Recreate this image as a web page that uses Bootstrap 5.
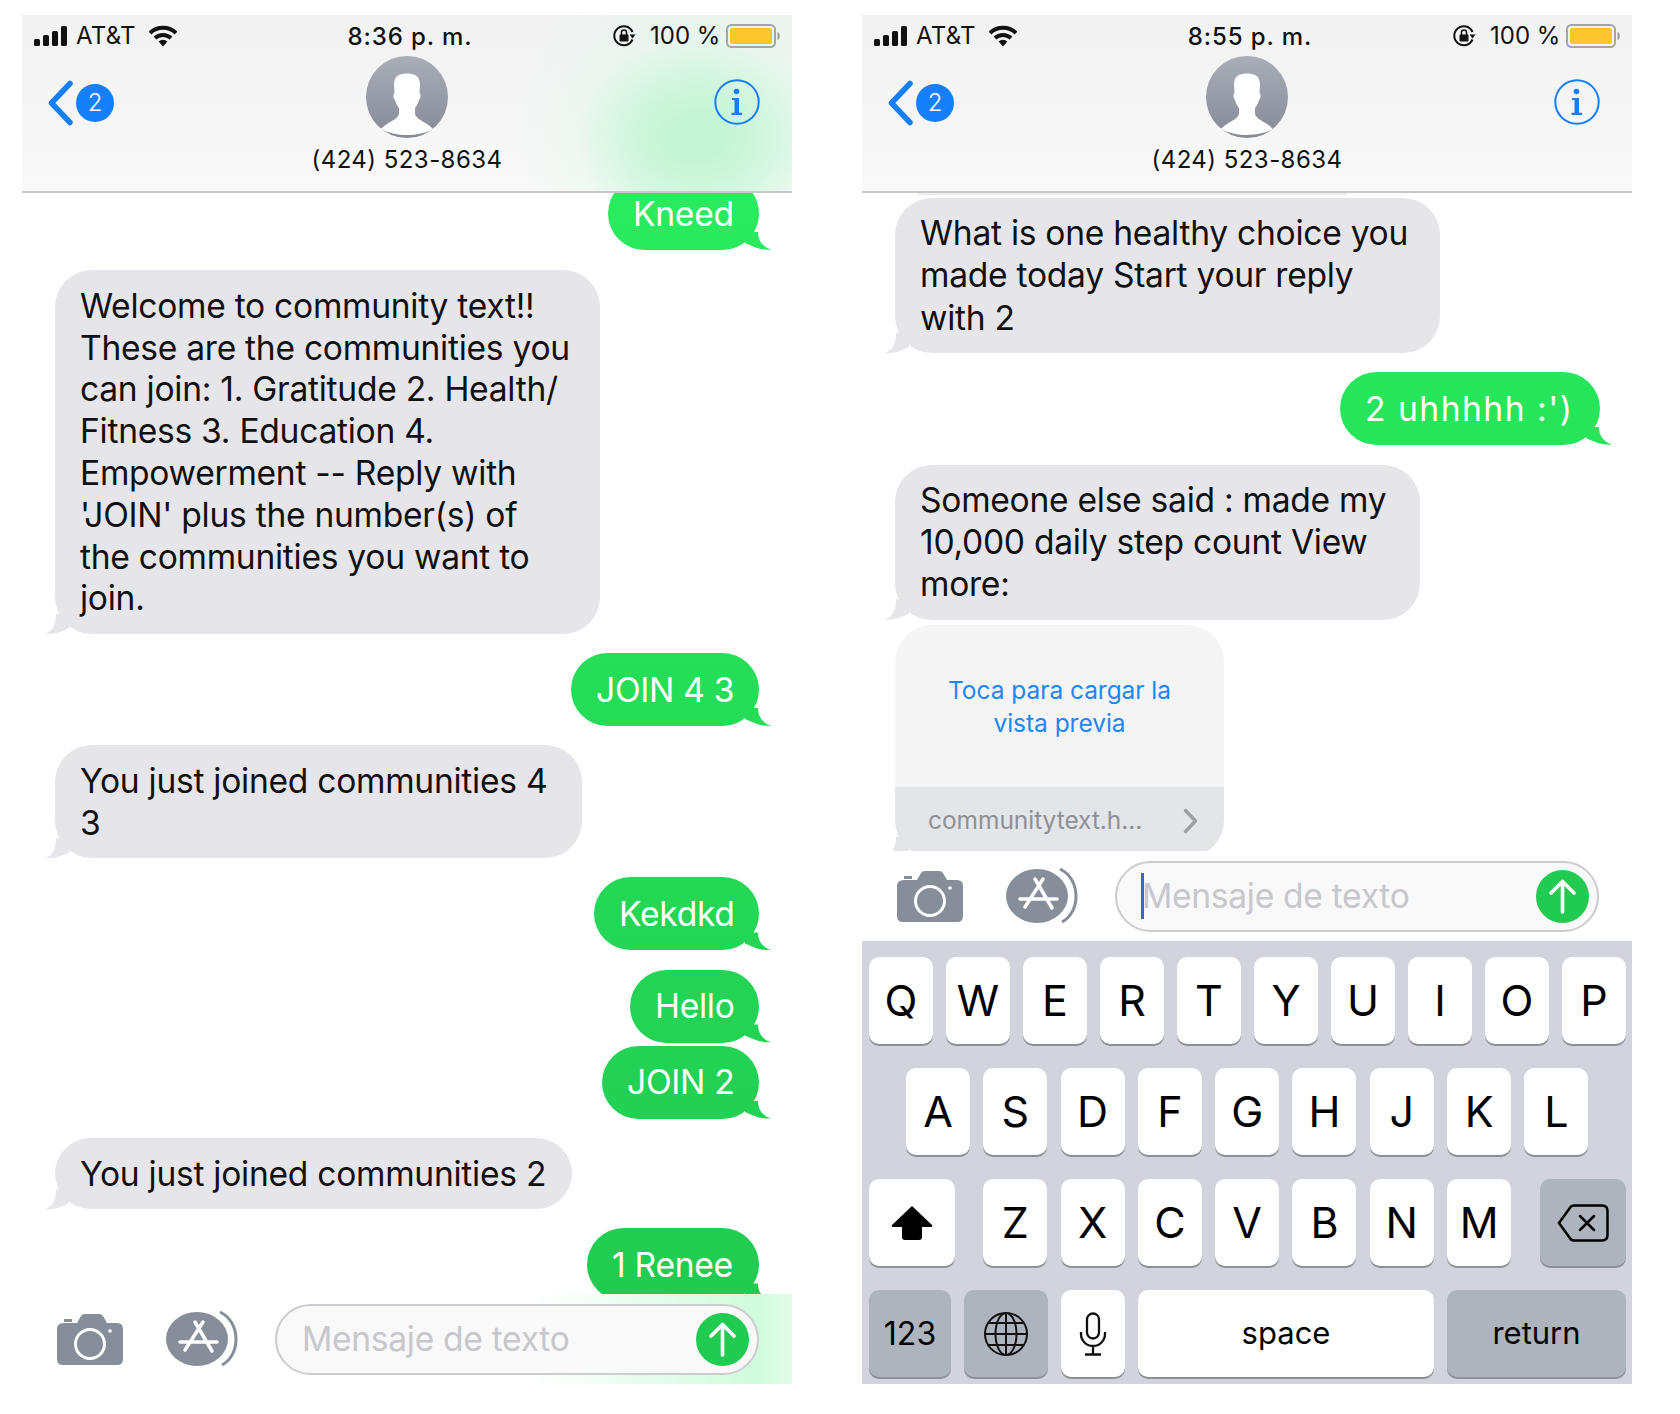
<!DOCTYPE html>
<html lang="es">
<head>
<meta charset="utf-8">
<title>Mensajes</title>
<link href="https://cdn.jsdelivr.net/npm/bootstrap@5.3.0/dist/css/bootstrap.min.css" rel="stylesheet">
<style>
html,body{background:#fff;margin:0}
body{font-family:Inter,"Noto Sans",sans-serif;height:1414px;overflow:hidden}
.stage{padding:15px 0 0 22px;gap:70px}
.phone{width:770px;height:1369px;overflow:hidden;background:#fff}
.phone-head{height:178px;flex:none;background:linear-gradient(#f2f2f3,#f9f9f9);border-bottom:2px solid #c8c8ca;color:#111}
.head-green{background:radial-gradient(ellipse 122px 98px at 674px 122px,#c6f5d6 0,#c6f5d6 25%,rgba(198,245,214,.5) 65%,rgba(198,245,214,0) 100%),radial-gradient(ellipse 200px 190px at 690px 120px,rgba(220,248,230,.9) 0,rgba(220,248,230,0) 100%),linear-gradient(#f2f2f3,#f9f9f9)}
.status-row{height:41px;display:grid;grid-template-columns:1fr auto 1fr;align-items:center;padding:0 11px 0 12px;font-size:24px;letter-spacing:-.2px}
.time-text{font-weight:500;padding-left:5px;padding-top:2px;letter-spacing:.9px}
.sig{width:34px;height:20px}
.wifi{width:28px;height:22px;margin-left:13px}
.carrier{margin-left:8px;letter-spacing:.25px}
.lock{width:24px;height:24px;margin-right:14px}
.pct{margin-right:5px;width:71px;white-space:nowrap;letter-spacing:0}
.batt{width:55px;height:24px}
.nav-row{display:grid;grid-template-columns:1fr auto 1fr;height:82px;align-items:center;padding:0 29px}
.nav-left{margin-left:-3px;padding-top:11px}
.nav-right{margin-right:3px;padding-top:10px}
.chev{width:28px;height:46px}
.badge-num{width:38px;height:38px;border-radius:50%;background:#147efb;color:#fff;font-size:24px;font-weight:300;margin-left:0}
.info-ic{width:46px;height:46px}
.avatar{width:82px;height:82px}
.phone-num{font-size:24px;line-height:30px;letter-spacing:.45px;margin-top:7px}
.msgs{flex:1 1 0;min-height:0;overflow:hidden;padding:0 33px}
.bub{font-size:33.6px;line-height:41.8px;border-radius:37px;white-space:nowrap;position:relative;margin-top:19.2px;letter-spacing:-.27px;flex:none}
.bub-in{background:#e5e5ea;color:#111;align-self:flex-start;padding:14.7px 26px 14.7px 25px}
.bub-out{background:linear-gradient(#29ec5d 170px,#21cb51 1300px) fixed;color:#fff;align-self:flex-end;text-align:center;padding:15.6px 28px 15.6px 25px}
.bub-in::before,.bub-out::before,.preview::before{content:"";position:absolute;bottom:0;width:40px;height:30px}
.bub-out::before{right:-12px;background:inherit;clip-path:path("M27 12 C27 21 32 27 40 29.500 C33 30.500 24 28 14 23 L14 12 Z")}
.bub-in::before{left:-10px;background:#e5e5ea;clip-path:path("M11 10 C11 20 8 27 0 30 C7 30.500 15 29 24 24 L24 10 Z")}
.first-left{margin-top:-16px;width:151px;margin-bottom:1px}
.tight{margin-top:3.3px}
.w-welcome{width:545px}.w-join43{width:188px}.w-joined43{width:527px}.w-kek{width:165px}.w-hello{width:129px}.w-join2{width:157px}.w-joined2{width:517px}.w-renee{width:172px}
.three-line{line-height:42.3px;padding-top:14px;padding-bottom:14px}
.w-healthy{width:545px;margin-top:3px}.w-uh{width:260px;margin-right:-1px;letter-spacing:1.5px}.w-someone{width:525px;margin-top:19.6px}
.sliver{height:2px;width:430px;margin-left:22px;background:#ededf0;flex:none}
.preview{width:329px;flex:none;height:232px;margin-top:5px;border-radius:37px;background:#f5f5f6;position:relative;align-self:flex-start}
.preview::before{left:-10px;background:#e4e5e9;clip-path:path("M11 10 C11 20 8 27 0 30 C7 30.500 15 29 24 24 L24 10 Z")}
.prev-top{height:162px;font-size:24.5px;line-height:33px;color:#1f86f5;letter-spacing:-.04px;padding-top:2px;position:relative;z-index:1}
.prev-bot{height:70px;background:#e4e5e9;border-radius:0 0 37px 37px;font-size:24.5px;color:#8f9094;padding:0 26px 2px 33px;position:relative;z-index:1;letter-spacing:-.05px}
.prev-chev{width:15px;height:26px}
.foot{flex:none;padding:0 33px 0 35px;background:#fff;position:relative;z-index:2;height:90px}
.foot-left{background:linear-gradient(90deg,rgba(205,251,220,0) 510px,#d0fbdd 735px,#e3fcea 770px)}
.cam{width:66px;height:52px;margin-right:43px}
.appi{width:73px;height:58px;margin-right:36px}
.inp{flex:1;height:71px;border:2px solid #cbcbd0;border-radius:36px;background:#f9f9f9;padding:0 8px 0 25px;font-size:33.6px;color:#c7c7cc;letter-spacing:-.3px}
.cursor{width:3px;height:46px;background:#3d60e3;margin-left:-1px;margin-right:-2px}
.send{width:53px;height:53px;margin-left:auto}
.kbd-area{flex:none;height:443px;background:#d1d4dc;padding:16px 7px 0 7px;gap:24px}
.kb-row{gap:13px;height:87px}
.kb-key{width:64px;height:87px;flex:none;background:#fff;border-radius:10px;box-shadow:0 2px 0 #8d9096;font-size:43px;color:#000;letter-spacing:0}
.kb-sys{background:#adb4be}
.row-a{padding-left:37px;gap:13.3px}
.row-z{gap:13.3px}
.wide-shift{width:86px}
.kb-gap{margin-right:15px}
.kb-del{width:86px;margin-left:16px}
.k-123{width:82px;font-size:32px}.k-globe{width:84px}.k-space{width:296px;font-size:31px}.k-return{width:179px;font-size:31px}
.ic-shift{width:42px;height:36px}.ic-del{width:52px;height:38px}.ic-globe{width:46px;height:46px}.ic-mic{width:28px;height:44px}
</style>
</head>
<body>
<svg width="0" height="0" class="d-block">
<defs>
<linearGradient id="avg" x1="0" y1="0" x2="0" y2="1"><stop offset="0" stop-color="#a9adb8"/><stop offset="1" stop-color="#858a96"/></linearGradient>
<symbol id="s-sig" viewBox="0 0 34 20"><rect x="0" y="13" width="6" height="7" rx="1.5" fill="#111"/><rect x="9" y="9" width="6" height="11" rx="1.5" fill="#111"/><rect x="18" y="5" width="6" height="15" rx="1.5" fill="#111"/><rect x="27" y="0" width="6" height="20" rx="1.5" fill="#111"/></symbol>
<symbol id="s-wifi" viewBox="0 0 28 22"><path d="M1 8 A19 19 0 0 1 27 8" fill="none" stroke="#111" stroke-width="4"/><path d="M6 13 A12 12 0 0 1 22 13" fill="none" stroke="#111" stroke-width="4"/><path d="M9.5 16.5 A7 7 0 0 1 18.5 16.5 L14 21.5 Z" fill="#111"/></symbol>
<symbol id="s-lock" viewBox="0 0 24 24"><path d="M20.5 15.5 A9.5 9.5 0 1 1 20.5 8" fill="none" stroke="#111" stroke-width="2"/><path d="M17.5 10.5 L23.5 10.5 L20.5 14.5Z" fill="#111"/><rect x="7.5" y="10.5" width="9" height="7" rx="1" fill="#111"/><path d="M9.5 11 V8.5 A2.5 2.5 0 0 1 14.5 8.5 V11" fill="none" stroke="#111" stroke-width="1.6"/></symbol>
<symbol id="s-batt" viewBox="0 0 55 24"><rect x="1" y="1" width="48" height="22" rx="4.5" fill="none" stroke="#a5a5a5" stroke-width="2"/><rect x="4" y="4" width="42" height="16" rx="2" fill="#fcc62d"/><path d="M51.500 8 C54.500 9 54.500 15 51.500 16Z" fill="#9a9a9a"/></symbol>
<symbol id="s-chev" viewBox="0 0 28 46"><path d="M22 3.500 L3.500 23 L22 42.500" fill="none" stroke="#147efb" stroke-width="5.500" stroke-linecap="round" stroke-linejoin="round"/></symbol>
<symbol id="s-info" viewBox="0 0 46 46"><circle cx="23" cy="23" r="21.700" fill="none" stroke="#147efb" stroke-width="2"/><circle cx="22.500" cy="12.500" r="2.800" fill="#147efb"/><path d="M18 19 H25 V33.800 H28 V36 H17.500 V33.800 H20.500 V21 H18Z" fill="#147efb"/></symbol>
<symbol id="s-avatar" viewBox="0 0 82 82"><circle cx="41" cy="41" r="41" fill="url(#avg)"/><path d="M41 17.500 C50 17.500 54 21 54 29 L53.500 37 C55 38 55 42 53 44 C52 48 50.500 50 49 52 L49 58 C50 62 56 65 61 68 C63 69 65 71 67 73 C60 77 50 79 41 79 C32 79 22 77 15 73 C17 71 19 69 21 68 C26 65 32 62 33 58 L33 52 C31.500 50 30 48 29 44 C27 42 27 38 28.500 37 L28 29 C28 21 32 17.500 41 17.500Z" fill="#fff"/></symbol>
<symbol id="s-cam" viewBox="0 0 66 52"><path d="M7 10 H20 L24 3 Q25 1 28 1 H42 Q45 1 46 3 L50 10 H60 Q66 10 66 16 V46 Q66 52 60 52 H6 Q0 52 0 46 V16 Q0 10 7 10Z" fill="#868e99"/><rect x="7" y="6" width="8" height="3" fill="#868e99"/><circle cx="33" cy="31" r="14.500" fill="none" stroke="#fff" stroke-width="3"/><circle cx="53" cy="18" r="1.800" fill="#fff"/></symbol>
<symbol id="s-app" viewBox="0 0 73 58"><path d="M54 2 C75 12 75 45 56 55" fill="none" stroke="#868e99" stroke-width="3"/><ellipse cx="31" cy="29" rx="31" ry="27" fill="#868e99"/><path d="M37 12 L19 40 M29 12 L46 41 M14 32 H51" fill="none" stroke="#fff" stroke-width="3.500" stroke-linecap="round"/></symbol>
<symbol id="s-send" viewBox="0 0 53 53"><circle cx="26.500" cy="26.500" r="26.500" fill="#21cb51"/><path d="M26.500 42 V12 M15 23 L26.500 11.500 L38 23" fill="none" stroke="#fff" stroke-width="3.600" stroke-linecap="round" stroke-linejoin="round"/></symbol>
<symbol id="s-shift" viewBox="0 0 42 36"><path d="M21 1 L41 20 Q42 22 39 22 H31 V32 Q31 35 28 35 H14 Q11 35 11 32 V22 H3 Q0 22 1 20Z" fill="#000"/></symbol>
<symbol id="s-del" viewBox="0 0 52 38"><path d="M17 1.500 H45 Q50.500 1.500 50.500 7 V31 Q50.500 36.500 45 36.500 H17 Q15 36.500 13.500 35 L2 19 L13.500 3 Q15 1.500 17 1.500Z" fill="none" stroke="#000" stroke-width="2.500"/><path d="M23 12 L37 26 M37 12 L23 26" stroke="#000" stroke-width="2.500" stroke-linecap="round"/></symbol>
<symbol id="s-globe" viewBox="0 0 46 46"><g fill="none" stroke="#111" stroke-width="2"><circle cx="23" cy="23" r="21"/><ellipse cx="23" cy="23" rx="10.500" ry="21"/><path d="M23 2 V44 M2 23 H44 M5.500 12 H40.500 M5.500 34 H40.500"/></g></symbol>
<symbol id="s-mic" viewBox="0 0 28 44"><g fill="none" stroke="#111" stroke-width="2.300"><rect x="8" y="1.500" width="12" height="25" rx="6"/><path d="M2 20 V22 A12 12 0 0 0 26 22 V20 M14 34 V42 M6 42.500 H22"/></g></symbol>
<symbol id="s-pchev" viewBox="0 0 15 26"><path d="M2.500 2.500 L12.500 13 L2.500 23.500" fill="none" stroke="#9e9fa3" stroke-width="3.500" stroke-linecap="round" stroke-linejoin="round"/></symbol>
</defs>
</svg>
<main class="stage d-flex">

<section class="phone d-flex flex-column">
  <header class="phone-head head-green">
    <div class="status-row">
      <div class="d-flex align-items-center"><svg class="sig"><use href="#s-sig"/></svg><span class="carrier">AT&amp;T</span><svg class="wifi"><use href="#s-wifi"/></svg></div>
      <div class="time-text">8:36 p. m.</div>
      <div class="d-flex align-items-center justify-content-end"><svg class="lock"><use href="#s-lock"/></svg><span class="pct">100 %</span><svg class="batt"><use href="#s-batt"/></svg></div>
    </div>
    <div class="nav-row">
      <div class="nav-left d-flex align-items-center"><svg class="chev"><use href="#s-chev"/></svg><span class="badge-num d-flex align-items-center justify-content-center">2</span></div>
      <svg class="avatar"><use href="#s-avatar"/></svg>
      <div class="nav-right d-flex justify-content-end"><svg class="info-ic"><use href="#s-info"/></svg></div>
    </div>
    <div class="phone-num text-center">(424) 523-8634</div>
  </header>
  <div class="msgs d-flex flex-column">
    <div class="bub bub-out first-left">Kneed</div>
    <div class="bub bub-in w-welcome">Welcome to community text!!<br>These are the communities you<br>can join: 1. Gratitude 2. Health/<br>Fitness 3. Education 4.<br>Empowerment -- Reply with<br>'JOIN' plus the number(s) of<br>the communities you want to<br>join.</div>
    <div class="bub bub-out w-join43">JOIN 4 3</div>
    <div class="bub bub-in w-joined43">You just joined communities 4<br>3</div>
    <div class="bub bub-out w-kek">Kekdkd</div>
    <div class="bub bub-out w-hello">Hello</div>
    <div class="bub bub-out w-join2 tight">JOIN 2</div>
    <div class="bub bub-in w-joined2">You just joined communities 2</div>
    <div class="bub bub-out w-renee">1 Renee</div>
  </div>
  <div class="foot foot-left d-flex align-items-center">
    <svg class="cam"><use href="#s-cam"/></svg>
    <svg class="appi"><use href="#s-app"/></svg>
    <div class="inp d-flex align-items-center"><span>Mensaje de texto</span><svg class="send"><use href="#s-send"/></svg></div>
  </div>
</section>

<section class="phone d-flex flex-column">
  <header class="phone-head">
    <div class="status-row">
      <div class="d-flex align-items-center"><svg class="sig"><use href="#s-sig"/></svg><span class="carrier">AT&amp;T</span><svg class="wifi"><use href="#s-wifi"/></svg></div>
      <div class="time-text">8:55 p. m.</div>
      <div class="d-flex align-items-center justify-content-end"><svg class="lock"><use href="#s-lock"/></svg><span class="pct">100 %</span><svg class="batt"><use href="#s-batt"/></svg></div>
    </div>
    <div class="nav-row">
      <div class="nav-left d-flex align-items-center"><svg class="chev"><use href="#s-chev"/></svg><span class="badge-num d-flex align-items-center justify-content-center">2</span></div>
      <svg class="avatar"><use href="#s-avatar"/></svg>
      <div class="nav-right d-flex justify-content-end"><svg class="info-ic"><use href="#s-info"/></svg></div>
    </div>
    <div class="phone-num text-center">(424) 523-8634</div>
  </header>
  <div class="msgs d-flex flex-column">
    <div class="sliver"></div>
    <div class="bub bub-in three-line w-healthy">What is one healthy choice you<br>made today Start your reply<br>with 2</div>
    <div class="bub bub-out w-uh">2 uhhhhh :')</div>
    <div class="bub bub-in three-line w-someone">Someone else said : made my<br>10,000 daily step count View<br>more:</div>
    <div class="preview">
      <div class="prev-top d-flex align-items-center justify-content-center text-center">Toca para cargar la<br>vista previa</div>
      <div class="prev-bot d-flex align-items-center justify-content-between"><span>communitytext.h...</span><svg class="prev-chev"><use href="#s-pchev"/></svg></div>
    </div>
  </div>
  <div class="foot d-flex align-items-center">
    <svg class="cam"><use href="#s-cam"/></svg>
    <svg class="appi"><use href="#s-app"/></svg>
    <div class="inp d-flex align-items-center"><span class="cursor"></span><span>Mensaje de texto</span><svg class="send"><use href="#s-send"/></svg></div>
  </div>
  <div class="kbd-area d-flex flex-column">
    <div class="kb-row d-flex">
      <div class="kb-key d-flex align-items-center justify-content-center">Q</div><div class="kb-key d-flex align-items-center justify-content-center">W</div><div class="kb-key d-flex align-items-center justify-content-center">E</div><div class="kb-key d-flex align-items-center justify-content-center">R</div><div class="kb-key d-flex align-items-center justify-content-center">T</div><div class="kb-key d-flex align-items-center justify-content-center">Y</div><div class="kb-key d-flex align-items-center justify-content-center">U</div><div class="kb-key d-flex align-items-center justify-content-center">I</div><div class="kb-key d-flex align-items-center justify-content-center">O</div><div class="kb-key d-flex align-items-center justify-content-center">P</div>
    </div>
    <div class="kb-row row-a d-flex">
      <div class="kb-key d-flex align-items-center justify-content-center">A</div><div class="kb-key d-flex align-items-center justify-content-center">S</div><div class="kb-key d-flex align-items-center justify-content-center">D</div><div class="kb-key d-flex align-items-center justify-content-center">F</div><div class="kb-key d-flex align-items-center justify-content-center">G</div><div class="kb-key d-flex align-items-center justify-content-center">H</div><div class="kb-key d-flex align-items-center justify-content-center">J</div><div class="kb-key d-flex align-items-center justify-content-center">K</div><div class="kb-key d-flex align-items-center justify-content-center">L</div>
    </div>
    <div class="kb-row row-z d-flex">
      <div class="kb-key wide-shift kb-gap d-flex align-items-center justify-content-center"><svg class="ic-shift"><use href="#s-shift"/></svg></div>
      <div class="kb-key d-flex align-items-center justify-content-center">Z</div><div class="kb-key d-flex align-items-center justify-content-center">X</div><div class="kb-key d-flex align-items-center justify-content-center">C</div><div class="kb-key d-flex align-items-center justify-content-center">V</div><div class="kb-key d-flex align-items-center justify-content-center">B</div><div class="kb-key d-flex align-items-center justify-content-center">N</div><div class="kb-key d-flex align-items-center justify-content-center">M</div>
      <div class="kb-key kb-sys kb-del d-flex align-items-center justify-content-center"><svg class="ic-del"><use href="#s-del"/></svg></div>
    </div>
    <div class="kb-row d-flex">
      <div class="kb-key kb-sys k-123 d-flex align-items-center justify-content-center">123</div>
      <div class="kb-key kb-sys k-globe d-flex align-items-center justify-content-center"><svg class="ic-globe"><use href="#s-globe"/></svg></div>
      <div class="kb-key d-flex align-items-center justify-content-center"><svg class="ic-mic"><use href="#s-mic"/></svg></div>
      <div class="kb-key k-space d-flex align-items-center justify-content-center">space</div>
      <div class="kb-key kb-sys k-return d-flex align-items-center justify-content-center">return</div>
    </div>
  </div>
</section>
</main>
<script src="https://cdn.jsdelivr.net/npm/bootstrap@5.3.0/dist/js/bootstrap.bundle.min.js"></script>
</body>
</html>
